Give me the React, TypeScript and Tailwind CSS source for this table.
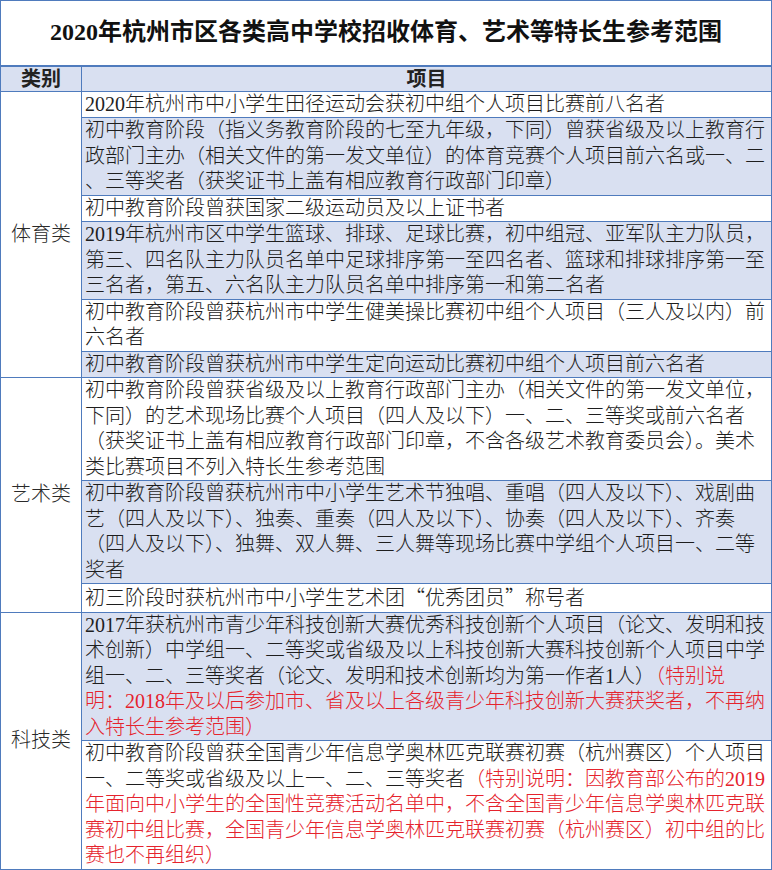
import React from "react";

type Seg = { t: string; red?: boolean };
type Line = Seg[] | string;
type Row = { lines: Line[]; fill: boolean };

const Q = ({ c }: { c: string }) => (
  <span style={{ fontFamily: '"Noto Sans CJK SC", sans-serif' }}>{c}</span>
);

const sports: Row[] = [
  { fill: false, lines: ["2020年杭州市中小学生田径运动会获初中组个人项目比赛前八名者"] },
  {
    fill: true,
    lines: [
      "初中教育阶段（指义务教育阶段的七至九年级，下同）曾获省级及以上教育行",
      "政部门主办（相关文件的第一发文单位）的体育竞赛个人项目前六名或一、二",
      "、三等奖者（获奖证书上盖有相应教育行政部门印章）",
    ],
  },
  { fill: false, lines: ["初中教育阶段曾获国家二级运动员及以上证书者"] },
  {
    fill: true,
    lines: [
      "2019年杭州市区中学生篮球、排球、足球比赛，初中组冠、亚军队主力队员，",
      "第三、四名队主力队员名单中足球排序第一至四名者、篮球和排球排序第一至",
      "三名者，第五、六名队主力队员名单中排序第一和第二名者",
    ],
  },
  {
    fill: false,
    lines: [
      "初中教育阶段曾获杭州市中学生健美操比赛初中组个人项目（三人及以内）前",
      "六名者",
    ],
  },
  { fill: true, lines: ["初中教育阶段曾获杭州市中学生定向运动比赛初中组个人项目前六名者"] },
];

const art: Row[] = [
  {
    fill: false,
    lines: [
      "初中教育阶段曾获省级及以上教育行政部门主办（相关文件的第一发文单位，",
      "下同）的艺术现场比赛个人项目（四人及以下）一、二、三等奖或前六名者",
      "（获奖证书上盖有相应教育行政部门印章，不含各级艺术教育委员会）。美术",
      "类比赛项目不列入特长生参考范围",
    ],
  },
  {
    fill: true,
    lines: [
      "初中教育阶段曾获杭州市中小学生艺术节独唱、重唱（四人及以下）、戏剧曲",
      "艺（四人及以下）、独奏、重奏（四人及以下）、协奏（四人及以下）、齐奏",
      "（四人及以下）、独舞、双人舞、三人舞等现场比赛中学组个人项目一、二等",
      "奖者",
    ],
  },
  { fill: false, lines: ["QUOTE"] },
];

const sci: Row[] = [
  {
    fill: true,
    lines: [
      "2017年获杭州市青少年科技创新大赛优秀科技创新个人项目（论文、发明和技",
      "术创新）中学组一、二等奖或省级及以上科技创新大赛科技创新个人项目中学",
      [
        { t: "组一、二、三等奖者（论文、发明和技术创新均为第一作者1人）" },
        { t: "（特别说", red: true },
      ],
      [{ t: "明：2018年及以后参加市、省及以上各级青少年科技创新大赛获奖者，不再纳", red: true }],
      [{ t: "入特长生参考范围）", red: true }],
    ],
  },
  {
    fill: false,
    lines: [
      "初中教育阶段曾获全国青少年信息学奥林匹克联赛初赛（杭州赛区）个人项目",
      [
        { t: "一、二等奖或省级及以上一、二、三等奖者" },
        { t: "（特别说明：因教育部公布的2019", red: true },
      ],
      [{ t: "年面向中小学生的全国性竞赛活动名单中，不含全国青少年信息学奥林匹克联", red: true }],
      [{ t: "赛初中组比赛，全国青少年信息学奥林匹克联赛初赛（杭州赛区）初中组的比", red: true }],
      [{ t: "赛也不再组织）", red: true }],
    ],
  },
];

function renderLine(l: Line, i: number) {
  if (l === "QUOTE") {
    return (
      <div key={i} className="whitespace-nowrap">
        初三阶段时获杭州市中小学生艺术团<Q c="“" />优秀团员<Q c="”" />称号者
      </div>
    );
  }
  if (typeof l === "string") {
    return (
      <div key={i} className="whitespace-nowrap">
        {l}
      </div>
    );
  }
  return (
    <div key={i} className="whitespace-nowrap">
      {l.map((s, j) => (
        <span key={j} className={s.red ? "text-[#e5232d]" : ""}>
          {s.t}
        </span>
      ))}
    </div>
  );
}

function Group({ name, rows }: { name: string; rows: Row[] }) {
  return (
    <>
      {rows.map((r, i) => (
        <tr key={i}>
          {i === 0 && (
            <td
              rowSpan={rows.length}
              className="border border-[#4f7bbd] bg-white text-center align-middle text-[#2a2a2a] p-0"
            >
              {name}
            </td>
          )}
          <td
            className={
              "border border-[#4f7bbd] pl-[3px] pr-0 py-0 align-top text-[#1e1e1e] " +
              (r.fill ? "bg-[#d9e0f1]" : "bg-white")
            }
          >
            {r.lines.map(renderLine)}
          </td>
        </tr>
      ))}
    </>
  );
}

export default function App() {
  return (
    <div
      className="w-[772px] h-[870px] bg-white overflow-hidden"
      style={{ fontFamily: '"Liberation Serif", "Noto Sans CJK SC", serif' }}
    >
      <table className="w-[772px] table-fixed border-collapse text-[20px] leading-[25.5px] font-light">
        <colgroup>
          <col className="w-[81px]" />
          <col />
        </colgroup>
        <tbody>
          <tr>
            <td
              colSpan={2}
              className="h-[65px] border border-[#4f7bbd] border-b-2 text-center align-middle font-bold text-[24px] text-[#111] p-0"
            >
              2020年杭州市区各类高中学校招收体育、艺术等特长生参考范围
            </td>
          </tr>
          <tr>
            <td className="h-[25px] border border-[#4f7bbd] bg-[#d9e0f1] text-center font-bold text-[#222] p-0 leading-[24px]">
              类别
            </td>
            <td className="h-[25px] border border-[#4f7bbd] bg-[#d9e0f1] text-center font-bold text-[#222] p-0 leading-[24px]">
              项目
            </td>
          </tr>
          <Group name="体育类" rows={sports} />
          <Group name="艺术类" rows={art} />
          <Group name="科技类" rows={sci} />
        </tbody>
      </table>
    </div>
  );
}
